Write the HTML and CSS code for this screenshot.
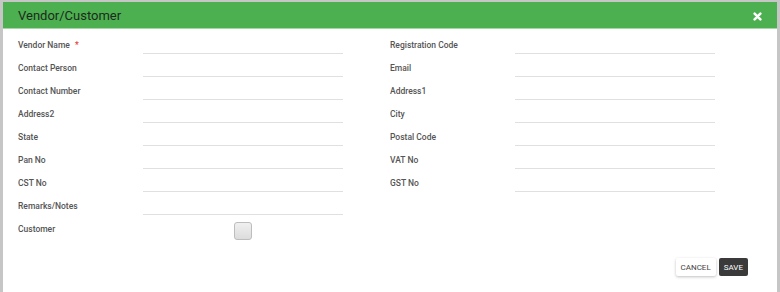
FILE: index.html
```html
<!DOCTYPE html>
<html lang="en">
  <head>
    <meta charset="UTF-8" />
    <meta name="viewport" content="width=device-width, initial-scale=1.0" />
    <title>Vendor/Customer</title>
    <link rel="stylesheet" href="styles.css">
  </head>
  <body>
    <div class="modal">
      <div class="modal-header">
        <span class="modal-title">Vendor/Customer</span>
        <span class="close">
          <svg width="9" height="9" viewBox="0 0 10 10">
            <path d="M1.8 1.8 L8.2 8.2 M8.2 1.8 L1.8 8.2" stroke="#fff" stroke-width="2.8" stroke-linecap="round"/>
          </svg>
        </span>
      </div>
      <div class="modal-body">
        <div class="form">
          <label>Vendor Name <span class="req">*</span></label>
          <input type="text">
          <span></span>
          <label>Registration Code</label>
          <input type="text">

          <label>Contact Person</label>
          <input type="text">
          <span></span>
          <label>Email</label>
          <input type="text">

          <label>Contact Number</label>
          <input type="text">
          <span></span>
          <label>Address1</label>
          <input type="text">

          <label>Address2</label>
          <input type="text">
          <span></span>
          <label>City</label>
          <input type="text">

          <label>State</label>
          <input type="text">
          <span></span>
          <label>Postal Code</label>
          <input type="text">

          <label>Pan No</label>
          <input type="text">
          <span></span>
          <label>VAT No</label>
          <input type="text">

          <label>CST No</label>
          <input type="text">
          <span></span>
          <label>GST No</label>
          <input type="text">

          <label>Remarks/Notes</label>
          <input type="text">
          <span></span>
          <span></span>
          <span></span>

          <label>Customer</label>
          <div class="check-cell"><span class="checkbox"></span></div>
        </div>
        <div class="actions">
          <button class="btn btn-cancel">CANCEL</button>
          <button class="btn btn-save">SAVE</button>
        </div>
      </div>
    </div>
  </body>
</html>
```

FILE: styles.css
```css
* {
  margin: 0;
  padding: 0;
  box-sizing: border-box;
}
body {
  font-family: Roboto, "Liberation Sans", Arial, sans-serif;
  background-color: #fff;
}
.modal {
  width: 780px;
  height: 292px;
  border: 2px solid #c6c6c6;
  border-bottom: none;
  border-right-width: 3px;
  border-left-width: 3px;
  background-color: #fff;
}
.modal-header {
  height: 27px;
  background-color: #4caf50;
  border-bottom: 1px solid #a5d6a7;
  display: flex;
  align-items: center;
  justify-content: space-between;
  padding: 0 15px 0 15px;
}
.modal-title {
  font-size: 13px;
  color: #1e2a1e;
  padding-top: 1px;
}
.close {
  display: flex;
  padding-top: 2px;
}
.modal-body {
  padding: 7px 0 0 15px;
}
.form {
  display: grid;
  grid-template-columns: 125px 200px 47px 125px 200px;
  grid-auto-rows: 23px;
  align-items: start;
}
.form label {
  font-size: 8.5px;
  font-weight: 500;
  color: #555;
  line-height: 17px;
  padding-top: 1px;
}
.req {
  color: #e53935;
  margin-left: 3px;
}
.form input {
  height: 18px;
  border: none;
  border-bottom: 1px solid #e0e0e0;
  outline: none;
  background: transparent;
}
.check-cell {
  display: flex;
  justify-content: center;
  padding-top: 2px;
}
.checkbox {
  width: 18px;
  height: 18px;
  border: 1px solid #bdbdbd;
  border-radius: 3px;
  background: linear-gradient(#f0f0f0, #dcdcdc);
}
.actions {
  display: flex;
  justify-content: flex-end;
  gap: 3px;
  padding: 15px 29px 0 0;
}
.btn {
  font-family: Roboto, "Liberation Sans", Arial, sans-serif;
  font-size: 8px;
  height: 18px;
  border: none;
  border-radius: 2px;
  padding: 0 5px;
}
.btn-cancel {
  background-color: #fff;
  color: #444;
  box-shadow: 0 1px 3px rgba(0, 0, 0, 0.25);
}
.btn-save {
  background-color: #3a3a3a;
  color: #fff;
}
```
